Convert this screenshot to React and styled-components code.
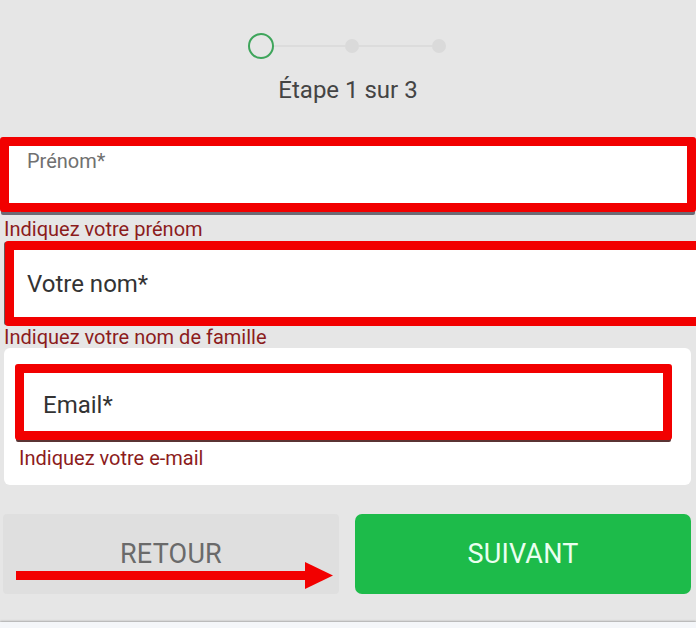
import React from 'react';
import styled, { createGlobalStyle } from 'styled-components';

const GlobalStyle = createGlobalStyle`
  html, body {
    margin: 0;
    padding: 0;
    background: #e6e6e6;
    font-family: Roboto, "Noto Sans", "Liberation Sans", sans-serif;
  }
`;

const Page = styled.div`
  width: 696px;
  height: 628px;
  overflow: hidden;
  display: flex;
  flex-direction: column;
  background: #e6e6e6;
`;

const Stepper = styled.div`
  margin-top: 33px;
  height: 26px;
  display: flex;
  align-items: center;
  justify-content: center;
  padding-right: 2px;
`;

const StepCircle = styled.div`
  width: 26px;
  height: 26px;
  box-sizing: border-box;
  border-radius: 50%;
  border: 2px solid #3ea55b;
`;

const StepDot = styled.div`
  width: 14px;
  height: 14px;
  border-radius: 50%;
  background: #dadada;
`;

const StepLine = styled.div`
  width: ${({ w }) => w}px;
  height: 2px;
  background: #dcdcdc;
`;

const Title = styled.div`
  margin-top: 17px;
  text-align: center;
  font-size: 24px;
  line-height: 28px;
  color: #444;
`;

const Field = styled.div`
  box-sizing: border-box;
  margin-top: ${({ mt }) => mt}px;
  margin-left: ${({ ml }) => ml}px;
  width: ${({ w }) => w}px;
  height: ${({ h }) => h}px;
  background: #fff;
  border: 9px solid #f20000;
  border-radius: 3px;
  box-shadow: ${({ shadow }) => shadow || 'none'};
  display: flex;
  align-items: ${({ floating }) => (floating ? 'flex-start' : 'center')};
  padding-left: ${({ pl }) => pl}px;
  padding-top: ${({ pt = 0 }) => pt}px;
  color: ${({ floating }) => (floating ? '#707070' : '#333')};
  font-size: ${({ floating }) => (floating ? '20px' : '24px')};
  line-height: 26px;
`;

const ErrorText = styled.div`
  margin-top: ${({ mt }) => mt}px;
  margin-left: ${({ ml }) => ml}px;
  font-size: 20px;
  line-height: 22px;
  color: #8c1c1c;
`;

const Card = styled.div`
  margin-top: 0;
  margin-left: 4px;
  width: 687px;
  height: 137px;
  box-sizing: border-box;
  background: #fff;
  border-radius: 6px;
  padding: 16px 0 0 11px;
  display: flex;
  flex-direction: column;
`;

const ButtonRow = styled.div`
  position: relative;
  margin-top: 29px;
  padding: 0 5px 0 3px;
  display: flex;
  gap: 16px;
  height: 80px;
`;

const Button = styled.div`
  flex: 1;
  display: flex;
  align-items: center;
  justify-content: center;
  border-radius: ${({ primary }) => (primary ? '7px' : '4px')};
  background: ${({ primary }) => (primary ? '#1dbb4a' : '#dfdfdf')};
  color: ${({ primary }) => (primary ? '#eafff0' : '#6a6a6a')};
  font-size: 27px;
  letter-spacing: 0.2px;
`;

const Arrow = styled.svg`
  position: absolute;
  left: 16px;
  top: 48px;
`;

const Footer = styled.div`
  margin-top: 28px;
  flex: 1;
  background: #f4f6f9;
  box-shadow: 0 -1px 2px rgba(0, 0, 0, 0.25);
`;

export default function App() {
  return (
    <Page>
      <GlobalStyle />
      <Stepper>
        <StepCircle />
        <StepLine w={71} />
        <StepDot />
        <StepLine w={73} />
        <StepDot />
      </Stepper>
      <Title>Étape 1 sur 3</Title>

      <Field mt={33} ml={0} w={696} h={75} pl={18} pt={2} floating shadow="0 4px 0 -1px #6e6a74">
        Prénom*
      </Field>
      <ErrorText mt={6} ml={4}>Indiquez votre prénom</ErrorText>

      <Field mt={1} ml={5} w={700} h={85} pl={13} shadow="-2px 0 0 -1px #6b5a5a">
        Votre nom*
      </Field>
      <ErrorText mt={0} ml={4}>Indiquez votre nom de famille</ErrorText>

      <Card>
        <Field mt={0} ml={0} w={657} h={76} pl={19} pt={6} shadow="0 3px 0 -1px #5a3434">
          Email*
        </Field>
        <ErrorText mt={7} ml={4}>Indiquez votre e-mail</ErrorText>
      </Card>

      <ButtonRow>
        <Button>RETOUR</Button>
        <Button primary>SUIVANT</Button>
        <Arrow width="320" height="28" viewBox="0 0 320 28">
          <rect x="0" y="9" width="293" height="9" fill="#f20000" />
          <polygon points="289,0 317,13.5 289,27" fill="#f20000" />
        </Arrow>
      </ButtonRow>
      <Footer />
    </Page>
  );
}
